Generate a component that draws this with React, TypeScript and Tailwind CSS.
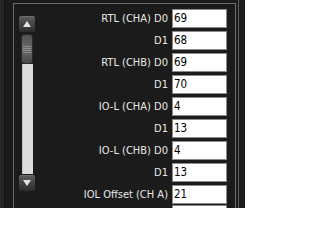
import React from "react";

const rows: [string, string][] = [
  ["RTL (CHA) D0", "69"],
  ["D1", "68"],
  ["RTL (CHB) D0", "69"],
  ["D1", "70"],
  ["IO-L (CHA) D0", "4"],
  ["D1", "13"],
  ["IO-L (CHB) D0", "4"],
  ["D1", "13"],
  ["IOL Offset (CH A)", "21"],
];

function ArrowButton({ up }: { up: boolean }) {
  return (
    <div className="w-[18px] h-[18px] rounded-[3px] border border-[#1c1c1c] bg-gradient-to-b from-[#5e5e5e] via-[#444] to-[#2c2c2c] flex items-center justify-center shadow-[inset_0_1px_0_#6e6e6e]">
      <svg width="8" height="6" viewBox="0 0 8 6">
        {up ? (
          <polygon points="4,0 8,6 0,6" fill="#e4e4e4" />
        ) : (
          <polygon points="0,0 8,0 4,6" fill="#e4e4e4" />
        )}
      </svg>
    </div>
  );
}

export default function App() {
  return (
    <div className="w-[245px] h-[208px] overflow-hidden bg-[#1b1b1b] flex font-['DejaVu_Sans_Condensed','DejaVu_Sans',sans-serif] font-stretch-condensed">
      <div className="w-[4px] bg-[#262626]" />
      <div className="w-[1px] bg-[#111]" />
      <div className="w-[8px]" />
      <div className="w-[223px] mt-[3px] border-l border-t border-r border-[#6a6a6a] flex flex-col">
        <div className="flex">
          <div className="ml-[4px] mt-[11px] w-[18px] flex flex-col items-center">
            <ArrowButton up />
            <div className="mt-[1px] w-[12px] h-[30px] rounded-[3px] bg-gradient-to-b from-[#505050] via-[#686868] to-[#4a4a4a] border border-[#2a2a2a] flex flex-col items-center justify-center gap-[1px]">
              <div className="w-[8px] h-[1px] bg-[#8e8e8e]" />
              <div className="w-[8px] h-[1px] bg-[#8e8e8e]" />
              <div className="w-[8px] h-[1px] bg-[#8e8e8e]" />
              <div className="w-[8px] h-[1px] bg-[#8e8e8e]" />
            </div>
            <div className="w-[11px] h-[110px] bg-[#dcdcdc] border-l border-[#c4c4c4]" />
            <ArrowButton up={false} />
          </div>
          <div className="flex-1 flex flex-col items-end gap-[3px] pt-[5px] pr-[8px]">
            {rows.map(([label, value], i) => (
              <div key={i} className="flex items-center justify-end gap-[4px] h-[19px]">
                <span className="text-[11px] leading-none text-[#e8e8e8] whitespace-nowrap">{label}</span>
                <div className="w-[55px] h-[19px] bg-white border border-[#8a8a8a] flex items-center pl-[1px] text-[11.5px] leading-none text-black">
                  {value}
                </div>
              </div>
            ))}
          </div>
        </div>
        <div className="-ml-[1px] mr-[3px] h-[1px] bg-[#f2f2f2]" />
        <div className="flex justify-end pr-[8px] mt-[1px]">
          <div className="w-[55px] h-[19px] bg-white border border-[#8a8a8a]" />
        </div>
      </div>
      <div className="w-[2px]" />
      <div className="w-[1px] bg-[#5e5e5e]" />
    </div>
  );
}
